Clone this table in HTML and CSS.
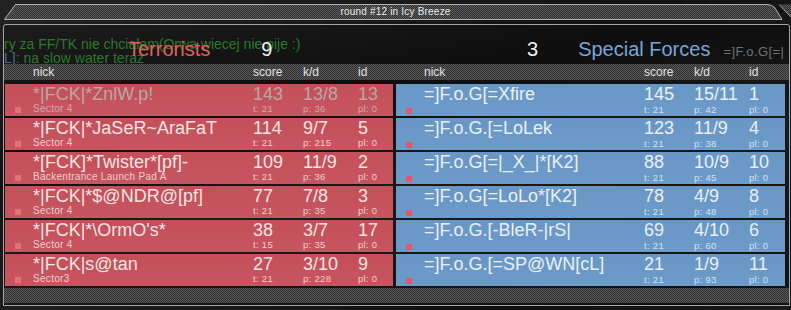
FILE: index.html
```html
<!DOCTYPE html>
<html>
<head>
<meta charset="utf-8">
<link rel="stylesheet" href="styles.css">
</head>
<body>
<div class="topbar">
  <svg class="topbar-shape" width="791" height="17" viewBox="0 0 791 17">
    <defs>
      <pattern id="dots" width="2" height="2" patternUnits="userSpaceOnUse">
        <rect width="2" height="2" fill="#2e2e2e"/>
        <rect width="1" height="1" fill="#5c5c5c"/>
        <rect x="1" y="1" width="1" height="1" fill="#5c5c5c"/>
      </pattern>
    </defs>
    <path d="M4.5 15.5 L15.5 0.5 L767 0.5 Q772 0.5 775 4 L782 15.5 Z" fill="url(#dots)" stroke="#b4b4b4" stroke-width="1"/>
    <path d="M780 0.5 L791 0.5 L791 13 Z" fill="url(#dots)"/>
    <path d="M779 0.5 L791 13" stroke="#b4b4b4" stroke-width="1" fill="none"/>
  </svg>
  <span class="title">round #12 in Icy Breeze</span>
</div>

<div class="panel">
  <div class="chat">
    <div class="chat-line">ry za FF/TK nie chcialem(Orwa wiecej nie pije :)</div>
    <div class="chat-line"><span class="chat-name">L]</span>: na slow water teraz</div>
  </div>

  <div class="teamhead">
    <div class="teamhead-side t-side">
      <span class="teamname t-name">Terrorists</span>
      <span class="teamscore t-score">9</span>
    </div>
    <div class="teamhead-side ct-side">
      <span class="teamscore">3</span>
      <span class="teamname ct-name">Special Forces</span>
      <span class="clan">=]F.o.G[=|</span>
    </div>
  </div>

  <div class="colhead">
    <div class="cols"><span></span><span>nick</span><span>score</span><span>k/d</span><span>id</span></div>
    <div class="cols"><span></span><span>nick</span><span>score</span><span>k/d</span><span>id</span></div>
  </div>

  <div class="tables">
    <div class="side">
      <div class="row red dead">
        <span class="name">*|FCK|*ZnlW.p!</span><span class="num c-score">143</span><span class="num c-kd">13/8</span><span class="num c-id">13</span>
        <span class="mark"></span><span class="loc">Sector 4</span><span class="sub c-score">t: 21</span><span class="sub c-kd">p: 36</span><span class="sub c-id">pl: 0</span>
      </div>
      <div class="row red">
        <span class="name">*|FCK|*JaSeR~AraFaT</span><span class="num c-score">114</span><span class="num c-kd">9/7</span><span class="num c-id">5</span>
        <span class="mark"></span><span class="loc">Sector 4</span><span class="sub c-score">t: 21</span><span class="sub c-kd">p: 215</span><span class="sub c-id">pl: 0</span>
      </div>
      <div class="row red">
        <span class="name">*[FCK]*Twister*[pf]-</span><span class="num c-score">109</span><span class="num c-kd">11/9</span><span class="num c-id">2</span>
        <span class="mark"></span><span class="loc">Backentrance Launch Pad A</span><span class="sub c-score">t: 21</span><span class="sub c-kd">p: 36</span><span class="sub c-id">pl: 0</span>
      </div>
      <div class="row red">
        <span class="name">*|FCK|*$@NDR@[pf]</span><span class="num c-score">77</span><span class="num c-kd">7/8</span><span class="num c-id">3</span>
        <span class="mark"></span><span class="loc">Sector 4</span><span class="sub c-score">t: 21</span><span class="sub c-kd">p: 35</span><span class="sub c-id">pl: 0</span>
      </div>
      <div class="row red">
        <span class="name">*|FCK|*\OrmO's*</span><span class="num c-score">38</span><span class="num c-kd">3/7</span><span class="num c-id">17</span>
        <span class="mark"></span><span class="loc">Sector 4</span><span class="sub c-score">t: 15</span><span class="sub c-kd">p: 35</span><span class="sub c-id">pl: 0</span>
      </div>
      <div class="row red">
        <span class="name">*|FCK|s@tan</span><span class="num c-score">27</span><span class="num c-kd">3/10</span><span class="num c-id">9</span>
        <span class="mark"></span><span class="loc">Sector3</span><span class="sub c-score">t: 21</span><span class="sub c-kd">p: 228</span><span class="sub c-id">pl: 0</span>
      </div>
    </div>

    <div class="side">
      <div class="row blue">
        <span class="name">=]F.o.G[=Xfire</span><span class="num c-score">145</span><span class="num c-kd">15/11</span><span class="num c-id">1</span>
        <span class="mark"></span><span class="sub c-score">t: 21</span><span class="sub c-kd">p: 42</span><span class="sub c-id">pl: 0</span>
      </div>
      <div class="row blue">
        <span class="name">=]F.o.G.[=LoLek</span><span class="num c-score">123</span><span class="num c-kd">11/9</span><span class="num c-id">4</span>
        <span class="mark"></span><span class="sub c-score">t: 21</span><span class="sub c-kd">p: 38</span><span class="sub c-id">pl: 0</span>
      </div>
      <div class="row blue">
        <span class="name">=]F.o.G[=|_X_|*[K2]</span><span class="num c-score">88</span><span class="num c-kd">10/9</span><span class="num c-id">10</span>
        <span class="mark"></span><span class="sub c-score">t: 21</span><span class="sub c-kd">p: 45</span><span class="sub c-id">pl: 0</span>
      </div>
      <div class="row blue">
        <span class="name">=]F.o.G[=LoLo*[K2]</span><span class="num c-score">78</span><span class="num c-kd">4/9</span><span class="num c-id">8</span>
        <span class="mark"></span><span class="sub c-score">t: 21</span><span class="sub c-kd">p: 48</span><span class="sub c-id">pl: 0</span>
      </div>
      <div class="row blue">
        <span class="name">=]F.o.G.[-BleR-|rS|</span><span class="num c-score">69</span><span class="num c-kd">4/10</span><span class="num c-id">6</span>
        <span class="mark"></span><span class="sub c-score">t: 21</span><span class="sub c-kd">p: 60</span><span class="sub c-id">pl: 0</span>
      </div>
      <div class="row blue">
        <span class="name">=]F.o.G.[=SP@WN[cL]</span><span class="num c-score">21</span><span class="num c-kd">1/9</span><span class="num c-id">11</span>
        <span class="mark"></span><span class="sub c-score">t: 21</span><span class="sub c-kd">p: 93</span><span class="sub c-id">pl: 0</span>
      </div>
    </div>
  </div>

  <div class="footer"></div>
</div>
</body>
</html>
```

FILE: styles.css
```css
html, body {
  margin: 0;
  padding: 0;
}
body {
  width: 791px;
  height: 310px;
  overflow: hidden;
  font-family: "Liberation Sans", Arial, sans-serif;
  background: linear-gradient(165deg, #232323 0%, #121212 35%, #1e1e1e 60%, #0f0f0f 85%, #1a1a1a 100%);
  color: #eee;
}

.topbar {
  position: relative;
  height: 17px;
  margin-top: 4px;
}
.topbar-shape {
  position: absolute;
  left: 0;
  top: 0;
}
.title {
  position: relative;
  display: block;
  text-align: center;
  font-size: 10px;
  line-height: 16px;
  letter-spacing: 0.2px;
  color: #ececec;
}

.panel {
  position: relative;
  margin: 3px 0 0 3px;
  width: 785px;
  border: 1px solid #a4a4a4;
  border-radius: 3px 3px 0 0;
  padding-bottom: 2px;
  background: linear-gradient(170deg, #1c1c1c 0%, #0e0e0e 30%, #1a1a1a 55%, #101010 100%);
}

.chat {
  position: absolute;
  left: 0;
  top: 12px;
  z-index: 0;
  font-size: 14px;
  line-height: 14px;
  color: #2a7a2a;
  white-space: nowrap;
}
.chat-name {
  color: #4a6a9e;
}

.teamhead {
  position: relative;
  z-index: 1;
  height: 39px;
  box-sizing: border-box;
  display: grid;
  grid-template-columns: 388px 389px;
  column-gap: 3px;
  padding: 0 3px 0 1px;
}
.teamhead-side {
  display: flex;
  align-items: baseline;
  padding-top: 14px;
  font-size: 20px;
  line-height: 20px;
  white-space: nowrap;
  min-width: 0;
}
.t-side {
  padding-left: 123px;
}
.ct-side {
  padding-left: 131px;
}
.t-name {
  color: #e0605f;
}
.ct-name {
  color: #76a6da;
  margin-left: 40px;
}
.teamscore {
  color: #f2f2f2;
}
.t-score {
  margin-left: 51px;
}
.clan {
  margin-left: 13px;
  font-size: 13px;
  letter-spacing: 0.4px;
  color: #6c7278;
}

.colhead,
.footer {
  background-color: #2e2e2e;
  background-image: repeating-conic-gradient(#5a5a5a 0 25%, #2e2e2e 0 50%);
  background-size: 2px 2px;
}
.colhead {
  position: relative;
  z-index: 1;
  height: 16px;
  box-sizing: border-box;
  display: grid;
  grid-template-columns: 388px 389px;
  column-gap: 3px;
  padding: 0 3px 0 1px;
  font-size: 12px;
  line-height: 17px;
  color: #e2e2e2;
}
.cols {
  display: grid;
  grid-template-columns: 28px 220px 50px 55px 1fr;
}

.tables {
  margin-top: 4px;
  display: grid;
  grid-template-columns: 388px 389px;
  column-gap: 3px;
  padding: 0 3px 0 1px;
}
.side {
  display: flex;
  flex-direction: column;
  gap: 2px;
}
.row {
  height: 32px;
  box-sizing: border-box;
  padding-top: 1px;
  display: grid;
  grid-template-columns: 28px 220px 50px 55px 1fr;
  grid-template-rows: 18px 10px;
  row-gap: 1px;
  white-space: nowrap;
}
.row.red {
  background: linear-gradient(180deg, #c44f58 0%, #c75560 100%);
  color: #f3e6e6;
}
.row.blue {
  background: linear-gradient(180deg, #6897c6 0%, #6c9bc9 100%);
  color: #eaf0f6;
}
.name {
  grid-column: 2;
  grid-row: 1;
  font-size: 18px;
  line-height: 18px;
}
.num {
  grid-row: 1;
  font-size: 18px;
  line-height: 18px;
}
.c-score {
  grid-column: 3;
}
.c-kd {
  grid-column: 4;
}
.c-id {
  grid-column: 5;
}
.mark {
  grid-column: 1;
  grid-row: 2;
  width: 6px;
  height: 6px;
  margin: 3px 0 0 10px;
}
.red .mark {
  background: #e6707a;
}
.blue .mark {
  background: #e95468;
  border-radius: 1px;
  margin-top: 4px;
}
.loc {
  grid-column: 2;
  grid-row: 2;
  font-size: 10px;
  line-height: 10px;
  letter-spacing: 0.3px;
  color: #ecd0d0;
}
.sub {
  grid-row: 2;
  font-size: 9.5px;
  line-height: 10px;
  letter-spacing: 0.3px;
  color: #ecd0d0;
}
.blue .sub {
  color: #d2e2f2;
  line-height: 11px;
}
.row.dead {
  color: #b6a8a8;
}
.dead .loc,
.dead .sub {
  color: #d0aaaa;
}

.footer {
  margin-top: 2px;
  height: 15px;
}
```
